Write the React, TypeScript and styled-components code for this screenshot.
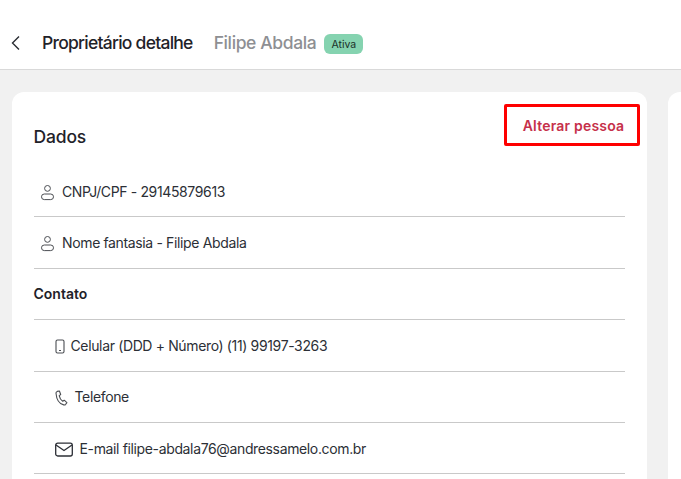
import type { FC, ReactNode } from "react";

import styled, { createGlobalStyle } from "styled-components";

const GlobalStyle = createGlobalStyle`
  html, body {
    margin: 0;
    padding: 0;
    height: 479px;
    overflow: hidden;
    background: #f1f1f1;
    font-family: Inter, "Noto Sans", sans-serif;
    color: #1f2229;
  }
  * {
    box-sizing: border-box;
  }
`;

const Header = styled.header`
  display: flex;
  align-items: center;
  height: 70px;
  padding: 16px 0 0 10px;
  background: #fff;
  border-bottom: 1px solid #d9d9d9;
`;

const BackButton = styled.button`
  display: flex;
  width: 12px;
  padding: 0;
  border: 0;
  background: none;
  color: #2a2d33;
`;

const Title = styled.h1`
  margin: 0 0 0 20px;
  font-size: 17.5px;
  font-weight: 500;
  letter-spacing: -0.75px;
  color: #1f2229;
`;

const Subtitle = styled.span`
  margin-left: 21px;
  font-size: 17.5px;
  font-weight: 500;
  letter-spacing: -0.38px;
  color: #8e8f93;
`;

const Badge = styled.span`
  display: flex;
  align-items: center;
  justify-content: center;
  width: 39px;
  height: 20px;
  margin: 3px 0 0 8px;
  border-radius: 6px;
  background: #85d3b0;
  font-size: 10.5px;
  color: #1b3029;
`;

const Main = styled.main`
  display: flex;
  gap: 21px;
  padding: 22px 0 0 12px;
`;

const Card = styled.section`
  flex: none;
  width: 635px;
  padding: 12px 22px 0 21.5px;
  border-radius: 12px 12px 0 0;
  background: #fff;
`;

const NextCard = styled.aside`
  flex: 1;
  min-width: 0;
  height: 400px;
  border-radius: 12px 0 0 0;
  background: #fff;
`;

const CardHeader = styled.div`
  display: flex;
  align-items: flex-start;
  justify-content: space-between;
  height: 62px;
`;

const CardTitle = styled.h2`
  margin: 21px 0 0;
  font-size: 17.5px;
  line-height: 24px;
  font-weight: 500;
  letter-spacing: -0.15px;
`;

const ChangeButton = styled.button`
  width: 136px;
  height: 42px;
  margin-right: -15px;
  padding: 0 0 0 3px;
  border: 3px solid #fe0000;
  border-radius: 2px;
  background: #fff;
  font-family: inherit;
  font-size: 14px;
  font-weight: 600;
  letter-spacing: 0.2px;
  color: #c6304a;
`;

const Row = styled.div<{ $indent?: number; $gap?: number }>`
  display: flex;
  align-items: center;
  gap: ${(props) => props.$gap ?? 8}px;
  height: 51.4px;
  padding-left: ${(props) => props.$indent ?? 0}px;
  border-bottom: 1px solid #c9c9c9;
  font-size: 14px;
  letter-spacing: -0.36px;
  color: #2c2f36;
`;

const SectionRow = styled(Row)`
  font-weight: 600;
  letter-spacing: 0;
  color: #1f2229;
`;

const IconSlot = styled.span`
  display: flex;
  flex: none;
  margin-top: 2px;
  color: #4a4d52;
`;

const PersonIcon: FC = () => (
  <svg width="15" height="17" viewBox="0 0 15 17" fill="none" stroke="currentColor" strokeWidth="1">
    <circle cx="7.5" cy="4.4" r="2.9" />
    <rect x="1.5" y="10" width="12" height="5.6" rx="2.8" />
  </svg>
);

const MobileIcon: FC = () => (
  <svg width="10" height="15" viewBox="0 0 10 15" fill="none" stroke="currentColor" strokeWidth="1.1">
    <rect x="1" y="1" width="8" height="13" rx="1.5" />
    <path d="M4 11.5h2" />
  </svg>
);

const PhoneIcon: FC = () => (
  <svg width="14" height="16" viewBox="0 0 14 16" fill="none" stroke="currentColor" strokeWidth="1.1" strokeLinejoin="round">
    <path d="M2.2 1.4 4.4 1l1.3 3.5-1.5 1.1c.4 2.4 1.6 4.3 3.5 5.6l1.5-1 2.7 2.4-1.2 1.7c-.5.6-1.2.8-2 .6C4.4 13.8 1.5 9.5 1 3.2c-.1-.8.4-1.5 1.2-1.8Z" />
  </svg>
);

const MailIcon: FC = () => (
  <svg width="18" height="15" viewBox="0 0 18 15" fill="none" stroke="#2c2f36" strokeWidth="1.3" strokeLinejoin="round">
    <rect x="0.7" y="1.2" width="16.6" height="12.8" rx="2" />
    <path d="m1 3 8 5.5L17 3" />
  </svg>
);

interface InfoRowProps {
  icon: ReactNode;
  indent: number;
  gap: number;
  children: ReactNode;
}

const InfoRow: FC<InfoRowProps> = ({ icon, indent, gap, children }) => (
  <Row $indent={indent} $gap={gap}>
    <IconSlot>{icon}</IconSlot>
    <span>{children}</span>
  </Row>
);

const App: FC = () => (
  <>
    <GlobalStyle />
    <Header>
      <BackButton aria-label="Voltar">
        <svg width="12" height="16" viewBox="0 0 12 16" fill="none" stroke="currentColor" strokeWidth="1.4">
          <path d="M9 1.5 2.5 8 9 14.5" />
        </svg>
      </BackButton>
      <Title>Proprietário detalhe</Title>
      <Subtitle>Filipe Abdala</Subtitle>
      <Badge>Ativa</Badge>
    </Header>
    <Main>
      <Card>
        <CardHeader>
          <CardTitle>Dados</CardTitle>
          <ChangeButton>Alterar pessoa</ChangeButton>
        </CardHeader>
        <InfoRow icon={<PersonIcon />} indent={6} gap={7.5}>
          CNPJ/CPF - 29145879613
        </InfoRow>
        <InfoRow icon={<PersonIcon />} indent={6} gap={7.5}>
          Nome fantasia - Filipe Abdala
        </InfoRow>
        <SectionRow>Contato</SectionRow>
        <InfoRow icon={<MobileIcon />} indent={21} gap={6}>
          Celular (DDD + Número) (11) 99197-3263
        </InfoRow>
        <InfoRow icon={<PhoneIcon />} indent={21} gap={6}>
          Telefone
        </InfoRow>
        <InfoRow icon={<MailIcon />} indent={21} gap={7}>
          E-mail filipe-abdala76@andressamelo.com.br
        </InfoRow>
      </Card>
      <NextCard />
    </Main>
  </>
);

export default App;
